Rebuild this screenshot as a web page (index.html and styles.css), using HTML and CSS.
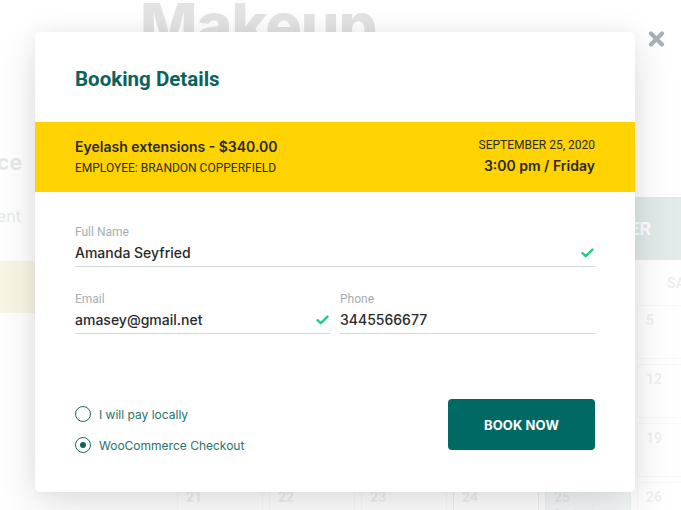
FILE: index.html
```html
<!DOCTYPE html>
<html lang="en">
<head>
<meta charset="utf-8">
<title>Booking Details</title>
<link rel="stylesheet" href="styles.css">
</head>
<body>
<div class="page">
  <h1 class="hero">Makeup</h1>
  <div class="main">
    <aside class="sidebar">
      <div class="step-title">Select Service</div>
      <div class="step-sub">Select Employment</div>
      <div class="step-active"></div>
    </aside>
    <section class="calendar">
      <div class="month"><span class="month-name">SEPTEMBER</span></div>
      <div class="weekdays">
        <span>MON</span><span>TUE</span><span>WED</span><span>THU</span><span>FRI</span><span>SAT</span><span>SUN</span>
      </div>
      <div class="grid">
        <div class="cell">31</div><div class="cell">1</div><div class="cell">2</div><div class="cell">3</div><div class="cell">4</div><div class="cell">5</div><div class="cell">6</div>
        <div class="cell">7</div><div class="cell">8</div><div class="cell">9</div><div class="cell">10</div><div class="cell">11</div><div class="cell">12</div><div class="cell">13</div>
        <div class="cell">14</div><div class="cell">15</div><div class="cell">16</div><div class="cell">17</div><div class="cell">18</div><div class="cell">19</div><div class="cell">20</div>
        <div class="cell">21</div><div class="cell">22</div><div class="cell">23</div><div class="cell cell-today">24</div><div class="cell cell-selected">25<span class="cell-note">September</span></div><div class="cell">26</div><div class="cell">27</div>
      </div>
    </section>
  </div>
</div>

<div class="overlay"></div>

<div class="modal">
  <div class="modal-head">
    <h2 class="modal-title">Booking Details</h2>
  </div>
  <div class="summary">
    <div class="summary-left">
      <div class="service">Eyelash extensions - $340.00</div>
      <div class="employee">EMPLOYEE: BRANDON COPPERFIELD</div>
    </div>
    <div class="summary-right">
      <div class="date">SEPTEMBER 25, 2020</div>
      <div class="time">3:00 pm / Friday</div>
    </div>
  </div>
  <div class="form">
    <div class="field">
      <div class="label">Full Name</div>
      <div class="value-row">
        <span class="value">Amanda Seyfried</span>
        <svg class="check" width="13" height="10" viewBox="0 0 13 10"><path d="M1.5 5.2 L4.8 8.2 L11.5 1.6" fill="none" stroke="#22cc85" stroke-width="2.4" stroke-linecap="round" stroke-linejoin="round"/></svg>
      </div>
    </div>
    <div class="field-row">
      <div class="field field-2">
        <div class="label">Email</div>
        <div class="value-row">
          <span class="value">amasey@gmail.net</span>
          <svg class="check" width="13" height="10" viewBox="0 0 13 10"><path d="M1.5 5.2 L4.8 8.2 L11.5 1.6" fill="none" stroke="#22cc85" stroke-width="2.4" stroke-linecap="round" stroke-linejoin="round"/></svg>
        </div>
      </div>
      <div class="field field-2">
        <div class="label">Phone</div>
        <div class="value-row">
          <span class="value">3445566677</span>
        </div>
      </div>
    </div>
    <div class="footer">
      <div class="radios">
        <label class="radio"><span class="radio-circle"></span>I will pay locally</label>
        <label class="radio"><span class="radio-circle radio-checked"></span>WooCommerce Checkout</label>
      </div>
      <button class="book-btn">BOOK NOW</button>
    </div>
  </div>
</div>

<button class="close" aria-label="Close">
  <svg width="17" height="16" viewBox="0 0 17 16"><path d="M3 2.5 L14 13.5 M14 2.5 L3 13.5" stroke="#a8b0b5" stroke-width="4.2" stroke-linecap="round"/></svg>
</button>
</body>
</html>
```
FILE: styles.css
```css
* { box-sizing: border-box; }
html, body {
  margin: 0;
  padding: 0;
  width: 681px;
  height: 510px;
  overflow: hidden;
  background: #ffffff;
  font-family: "Inter", "Roboto", "Liberation Sans", sans-serif;
}
.page {
  width: 681px;
  height: 510px;
  overflow: hidden;
}
.hero {
  margin: -5px 0 0 0;
  padding-left: 140px;
  font-family: "Inter", "Liberation Sans", sans-serif;
  font-weight: 800;
  font-size: 61px;
  line-height: 61px;
  letter-spacing: -1px;
  color: #2a2a2a;
  white-space: nowrap;
}
.main {
  display: flex;
  align-items: flex-start;
}
.sidebar {
  width: 300px;
  margin-left: -230px;
  padding-top: 95px;
  text-align: right;
  flex-shrink: 0;
  white-space: nowrap;
}
.step-title {
  padding-right: 48px;
  font-family: "Inter", sans-serif;
  font-weight: 700;
  font-size: 21px;
  line-height: 24px;
  color: #2e5c55;
}
.step-sub {
  margin-top: 31px;
  padding-right: 49px;
  font-family: "Inter", sans-serif;
  font-size: 16px;
  line-height: 20px;
  color: #2e5c55;
}
.step-active {
  margin-top: 35px;
  height: 52px;
  background: #d7b640;
}
.calendar {
  margin-left: 107px;
  margin-top: 141px;
  width: 638px;
  flex-shrink: 0;
}
.month {
  height: 63px;
  background: #10655d;
  display: flex;
  align-items: center;
  justify-content: flex-end;
  padding-right: 164px;
}
.month-name {
  font-family: "Roboto", sans-serif;
  font-weight: 700;
  font-size: 18px;
  color: #ffffff;
}
.weekdays {
  height: 45px;
  display: grid;
  grid-template-columns: repeat(7, 86px);
  column-gap: 6px;
  align-items: center;
  justify-items: center;
}
.weekdays span {
  font-family: "Roboto", sans-serif;
  font-weight: 700;
  font-size: 14px;
  color: #6a7d7b;
}
.grid {
  display: grid;
  grid-template-columns: repeat(7, 86px);
  grid-auto-rows: 54px;
  gap: 5px 6px;
}
.cell {
  border: 1px solid #c4c4c4;
  padding: 6px 8px;
  font-family: "Roboto", sans-serif;
  font-weight: 700;
  font-size: 14px;
  color: #8a8a8a;
  display: flex;
  flex-direction: column;
}
.cell-today {
  border-color: #5a9c95;
}
.cell-selected {
  background: #a6c9c5;
  border-color: #7aaaa4;
  color: #3a7d77;
}
.cell-note {
  font-size: 11px;
  margin-top: 2px;
}
.overlay {
  position: absolute;
  inset: 0;
  background: rgba(255, 255, 255, 0.87);
}
.modal {
  position: absolute;
  left: 35px;
  top: 32px;
  width: 600px;
  height: 460px;
  background: #ffffff;
  border-radius: 5px;
  box-shadow: 0 14px 45px rgba(0, 0, 0, 0.12), 0 0 18px rgba(0, 0, 0, 0.05);
  overflow: hidden;
}
.modal-head {
  height: 90px;
  padding: 34px 40px 0;
}
.modal-title {
  margin: 0;
  font-family: "Roboto", sans-serif;
  font-weight: 700;
  font-size: 20.5px;
  line-height: 26px;
  color: #0b625c;
}
.summary {
  height: 70px;
  background: #ffd300;
  padding: 15px 40px 0;
  display: flex;
  justify-content: space-between;
  align-items: flex-start;
  color: #2a2a2a;
}
.service {
  font-family: "Inter", sans-serif;
  font-weight: 600;
  font-size: 14px;
  line-height: 20px;
}
.employee {
  margin-top: 3px;
  font-family: "Roboto", sans-serif;
  font-size: 12px;
  line-height: 16px;
}
.summary-right {
  text-align: right;
}
.date {
  font-family: "Roboto", sans-serif;
  font-size: 12px;
  line-height: 16px;
}
.time {
  margin-top: 3px;
  font-family: "Inter", sans-serif;
  font-weight: 600;
  font-size: 14px;
  line-height: 20px;
}
.form {
  padding: 33px 40px 0;
}
.field {
  border-bottom: 1px solid #d0d8dc;
  padding-bottom: 3px;
}
.label {
  font-family: "Roboto", sans-serif;
  font-size: 12px;
  line-height: 14px;
  color: #a5adb2;
}
.value-row {
  margin-top: 2px;
  height: 22px;
  display: flex;
  align-items: center;
  justify-content: space-between;
}
.value {
  font-family: "Inter", sans-serif;
  font-weight: 500;
  font-size: 14px;
  color: #2a2a2a;
}
.check {
  margin-right: 1px;
  margin-top: 2px;
}
.field-row {
  margin-top: 25px;
  display: grid;
  grid-template-columns: 1fr 1fr;
  column-gap: 10px;
}
.footer {
  margin-top: 65px;
  display: flex;
  justify-content: space-between;
  align-items: flex-start;
}
.radios {
  margin-top: 5px;
  display: flex;
  flex-direction: column;
  gap: 11px;
}
.radio {
  display: flex;
  align-items: center;
  gap: 8px;
  height: 20px;
  font-family: "Inter", sans-serif;
  font-size: 12px;
  color: #26736d;
}
.radio-circle {
  width: 16px;
  height: 16px;
  border: 1.5px solid #1f6b66;
  border-radius: 50%;
  display: flex;
  align-items: center;
  justify-content: center;
}
.radio-checked::after {
  content: "";
  width: 6px;
  height: 6px;
  border-radius: 50%;
  background: #0e635d;
}
.book-btn {
  width: 147px;
  height: 51px;
  border: none;
  border-radius: 4px;
  background: #006964;
  color: #ffffff;
  font-family: "Inter", sans-serif;
  font-weight: 700;
  font-size: 13px;
  letter-spacing: 0.1px;
  padding: 0;
}
.close {
  position: absolute;
  left: 648px;
  top: 31px;
  width: 17px;
  height: 16px;
  padding: 0;
  border: none;
  background: none;
  display: block;
}
.close svg { display: block; }
```
